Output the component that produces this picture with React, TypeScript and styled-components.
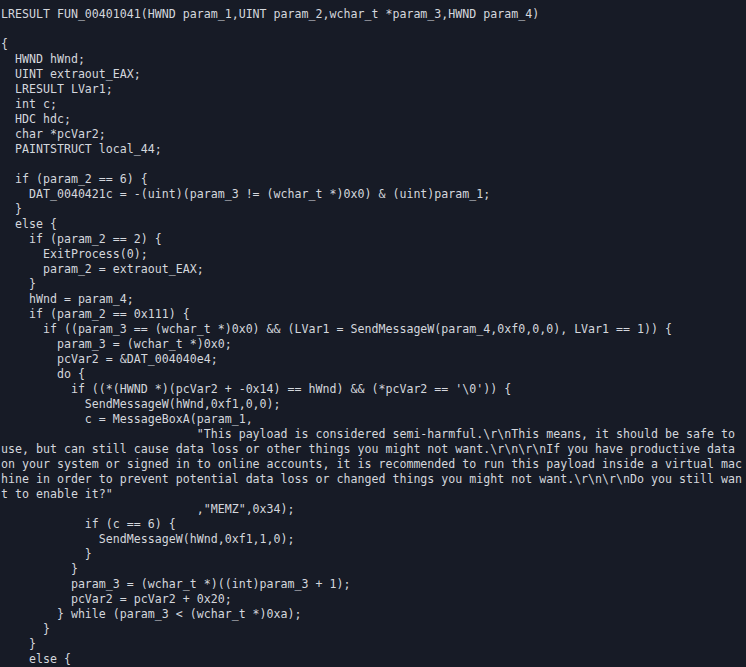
import React from "react";
import styled, { createGlobalStyle } from "styled-components";

const Global = createGlobalStyle`
  html, body {
    margin: 0;
    padding: 0;
    background: #171b26;
  }
  #root {
    min-height: 100vh;
  }
`;

const Viewer = styled.div`
  width: 746px;
  height: 667px;
  overflow: hidden;
  background: #171b26;
  color: #d4d7dd;
  font-family: "DejaVu Sans Mono", "Liberation Mono", monospace;
  font-size: 11.62px;
  padding: 7px 0 0 1px;
  box-sizing: border-box;
`;

const CodeLine = styled.div`
  height: 15px;
  line-height: 15px;
  white-space: pre;
`;

const S = (n: number) => " ".repeat(n);

const lines: string[] = [
  "LRESULT FUN_00401041(HWND param_1,UINT param_2,wchar_t *param_3,HWND param_4)",
  "",
  "{",
  S(2) + "HWND hWnd;",
  S(2) + "UINT extraout_EAX;",
  S(2) + "LRESULT LVar1;",
  S(2) + "int c;",
  S(2) + "HDC hdc;",
  S(2) + "char *pcVar2;",
  S(2) + "PAINTSTRUCT local_44;",
  S(2),
  S(2) + "if (param_2 == 6) {",
  S(4) + "DAT_0040421c = -(uint)(param_3 != (wchar_t *)0x0) & (uint)param_1;",
  S(2) + "}",
  S(2) + "else {",
  S(4) + "if (param_2 == 2) {",
  S(6) + "ExitProcess(0);",
  S(6) + "param_2 = extraout_EAX;",
  S(4) + "}",
  S(4) + "hWnd = param_4;",
  S(4) + "if (param_2 == 0x111) {",
  S(6) +
    "if ((param_3 == (wchar_t *)0x0) && (LVar1 = SendMessageW(param_4,0xf0,0,0), LVar1 == 1)) {",
  S(8) + "param_3 = (wchar_t *)0x0;",
  S(8) + "pcVar2 = &DAT_004040e4;",
  S(8) + "do {",
  S(10) + "if ((*(HWND *)(pcVar2 + -0x14) == hWnd) && (*pcVar2 == '\\0')) {",
  S(12) + "SendMessageW(hWnd,0xf1,0,0);",
  S(12) + "c = MessageBoxA(param_1,",
  S(28) +
    "\"This payload is considered semi-harmful.\\r\\nThis means, it should be safe to ",
  "use, but can still cause data loss or other things you might not want.\\r\\n\\r\\nIf you have productive data ",
  "on your system or signed in to online accounts, it is recommended to run this payload inside a virtual mac",
  "hine in order to prevent potential data loss or changed things you might not want.\\r\\n\\r\\nDo you still wan",
  "t to enable it?\"",
  S(28) + ",\"MEMZ\",0x34);",
  S(12) + "if (c == 6) {",
  S(14) + "SendMessageW(hWnd,0xf1,1,0);",
  S(12) + "}",
  S(10) + "}",
  S(10) + "param_3 = (wchar_t *)((int)param_3 + 1);",
  S(10) + "pcVar2 = pcVar2 + 0x20;",
  S(8) + "} while (param_3 < (wchar_t *)0xa);",
  S(6) + "}",
  S(4) + "}",
  S(4) + "else {",
];

export default function App() {
  return (
    <>
      <Global />
      <Viewer>
        {lines.map((l, i) => (
          <CodeLine key={i}>{l || " "}</CodeLine>
        ))}
      </Viewer>
    </>
  );
}
